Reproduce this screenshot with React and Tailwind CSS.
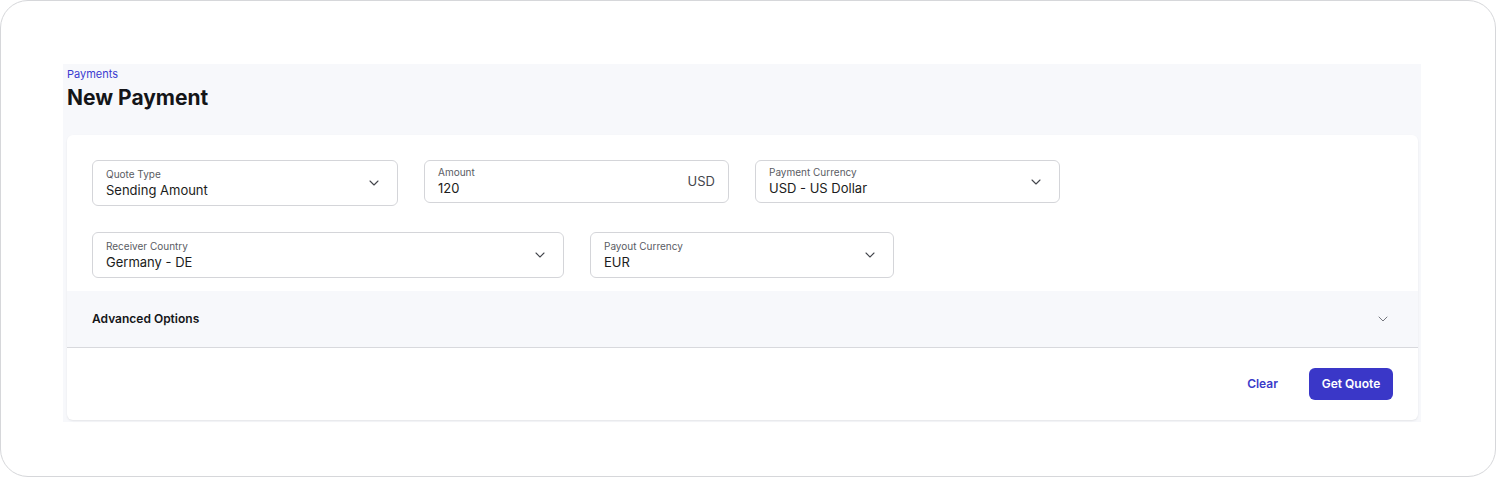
import React from 'react';
import { ChevronDown } from 'lucide-react';

function Field({ label, value, width, height = 'h-[46px]', suffix, chevron = true }) {
  return (
    <div className={`${width} ${height} border border-[#d4d5d9] rounded-md px-[13px] flex items-center justify-between bg-white`}>
      <div className="flex flex-col">
        <span className="text-[10px] leading-[13px] text-[#5a5c63]">{label}</span>
        <span className="text-[13px] leading-[18px] text-[#1b1c20]">{value}</span>
      </div>
      {suffix && <span className="text-[13px] text-[#44464d]">{suffix}</span>}
      {chevron && <ChevronDown size={16} strokeWidth={1.6} className="text-[#44464d] mr-[2px]" />}
    </div>
  );
}

export default function App() {
  return (
    <div className="w-[1496px] h-[478px] bg-white" style={{ fontFamily: 'Inter, sans-serif' }}>
      <div className="w-[1496px] h-[477px] border border-[#d6d7da] rounded-[28px] pt-[63px] pl-[62px]">
        <div className="w-[1358px] h-[358px] bg-[#f7f8fb] px-[4px] pt-[3px]">
          <div className="text-[11px] leading-[14px] text-[#3b3bd0]">Payments</div>
          <h1 className="text-[21px] leading-[28px] font-bold text-[#141518] mt-[3px]">New Payment</h1>
          <div className="mt-[23px] w-[1351px] bg-white rounded-md shadow-[0_1px_2px_rgba(0,0,0,0.08)] overflow-hidden">
            <div className="px-[25px] pt-[25px] pb-[13px] flex flex-col gap-[26px]">
              <div className="flex gap-[26px] items-start">
                <Field label="Quote Type" value="Sending Amount" width="w-[306px]" />
                <Field label="Amount" value="120" width="w-[305px]" height="h-[43px]" suffix="USD" chevron={false} />
                <Field label="Payment Currency" value="USD - US Dollar" width="w-[305px]" height="h-[43px]" />
              </div>
              <div className="flex gap-[26px]">
                <Field label="Receiver Country" value="Germany - DE" width="w-[472px]" />
                <Field label="Payout Currency" value="EUR" width="w-[304px]" />
              </div>
            </div>
            <div className="h-[57px] bg-[#f7f8fb] border-b border-[#d8d9dd] px-[25px] flex items-center justify-between">
              <span className="text-[12px] font-semibold text-[#141518]">Advanced Options</span>
              <ChevronDown size={16} strokeWidth={1.4} className="text-[#6b6d74] mr-[2px]" />
            </div>
            <div className="h-[72px] flex items-center justify-end gap-[31px] pr-[25px]">
              <button className="text-[12px] font-semibold text-[#3b3bc9]">Clear</button>
              <button className="w-[84px] h-[32px] rounded-md bg-[#3a37c8] text-white text-[12px] font-semibold">Get Quote</button>
            </div>
          </div>
        </div>
      </div>
    </div>
  );
}
